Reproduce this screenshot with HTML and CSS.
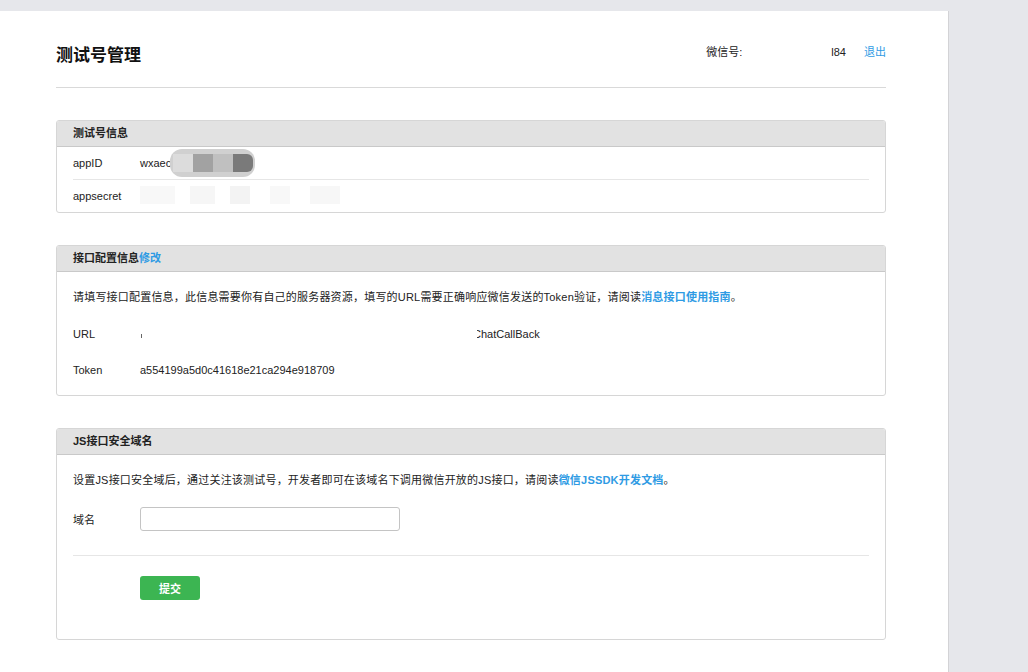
FILE: index.html
```html
<!DOCTYPE html>
<html lang="zh-CN">
<head>
<meta charset="utf-8">
<title>测试号管理</title>
<link rel="stylesheet" href="styles.css">
</head>
<body>
<div class="page">
  <div class="content">
    <div class="header">
      <h1 class="title">测试号管理</h1>
      <div class="account">
        <span class="acc-label">微信号:</span>
        <span class="acc-id">l84</span>
        <a class="link logout" href="#">退出</a>
      </div>
    </div>

    <div class="panel">
      <div class="panel-hd">测试号信息</div>
      <div class="panel-bd info">
        <div class="info-row">
          <span class="label">appID</span>
          <span class="value">wxaec<span class="blur"><span class="b1"></span><span class="b2"></span><span class="b3"></span><span class="b4"></span></span></span>
        </div>
        <div class="info-row">
          <span class="label">appsecret</span>
          <span class="value faint"><span class="f1"></span><span class="f2"></span><span class="f3"></span><span class="f4"></span><span class="f5"></span></span>
        </div>
      </div>
    </div>

    <div class="panel">
      <div class="panel-hd">接口配置信息<a class="link" href="#">修改</a></div>
      <div class="panel-bd cfg">
        <p class="desc">请填写接口配置信息，此信息需要你有自己的服务器资源，填写的URL需要正确响应微信发送的Token验证，请阅读<a class="link" href="#">消息接口使用指南</a>。</p>
        <div class="kv">
          <span class="label">URL</span>
          <span class="value"><span class="mask"><span class="mark"></span></span>ChatCallBack</span>
        </div>
        <div class="kv">
          <span class="label">Token</span>
          <span class="value">a554199a5d0c41618e21ca294e918709</span>
        </div>
      </div>
    </div>

    <div class="panel">
      <div class="panel-hd">JS接口安全域名</div>
      <div class="panel-bd js">
        <p class="desc">设置JS接口安全域后，通过关注该测试号，开发者即可在该域名下调用微信开放的JS接口，请阅读<a class="link" href="#">微信JSSDK开发文档</a>。</p>
        <div class="form-row">
          <span class="label">域名</span>
          <input class="input" type="text">
        </div>
        <div class="sep"></div>
        <div class="actions">
          <button class="btn" type="button">提交</button>
        </div>
      </div>
    </div>
  </div>
</div>
</body>
</html>
```

FILE: styles.css
```css
html, body {
  margin: 0;
  padding: 0;
}
body {
  background: #e6e7eb;
  font-family: "Liberation Sans", "Noto Sans CJK SC", sans-serif;
  font-size: 11px;
  color: #222;
}
.page {
  margin-top: 11px;
  width: 949px;
  min-height: 661px;
  background: #fff;
  border-right: 1px solid #d3d3d6;
  box-sizing: border-box;
}
.content {
  width: 830px;
  margin-left: 56px;
}
.header {
  display: flex;
  justify-content: space-between;
  align-items: flex-start;
  padding: 33px 0 19px;
  border-bottom: 1px solid #d9d9d9;
}
.title {
  margin: 0;
  font-size: 17px;
  line-height: 24px;
  font-weight: bold;
  color: #111;
}
.account {
  display: flex;
  line-height: 18px;
  margin-top: -1px;
  color: #222;
}
.acc-id {
  margin-left: 89px;
}
.logout {
  margin-left: 18px;
}
.link {
  color: #2f9be4;
  text-decoration: none;
  font-weight: bold;
}
.logout { font-weight: normal; }
.panel {
  margin-top: 32px;
  border: 1px solid #d6d6d6;
  border-radius: 3px;
  overflow: hidden;
}
.panel-hd {
  height: 25px;
  line-height: 25px;
  padding: 0 16px;
  background: #e2e2e2;
  border-bottom: 1px solid #c9c9c9;
  font-weight: bold;
  color: #222;
}
.label {
  display: inline-block;
  width: 67px;
  flex: none;
}
.info {
  padding: 0 16px;
}
.info-row {
  display: flex;
  align-items: center;
  height: 32px;
}
.info-row + .info-row {
  border-top: 1px solid #e6e6e6;
}
.value {
  display: inline-flex;
  align-items: center;
}
.blur {
  display: inline-flex;
  align-items: center;
  margin-left: -1px;
  height: 28px;
  padding: 0 2px 0 3px;
  border-radius: 12px;
  background: #d0d0d0;
}
.blur span {
  display: block;
  width: 20px;
  height: 18px;
}
.b1 { background: #dcdcdc; }
.b2 { background: #a2a2a2; }
.b3 { background: #c0c0c0; }
.b4 { background: #7a7a7a; border-radius: 0 6px 6px 0; }
.faint {
  position: relative;
  top: -1px;
  height: 18px;
}
.faint span {
  display: block;
  height: 18px;
  background: #f6f6f6;
}
.f1 { width: 35px; margin-right: 15px; background: #f8f8f8 !important; }
.f2 { width: 25px; margin-right: 15px; }
.f3 { width: 20px; margin-right: 20px; background: #f3f3f3 !important; }
.f4 { width: 20px; margin-right: 20px; background: #f8f8f8 !important; }
.f5 { width: 30px; background: #f7f7f7 !important; }
.cfg {
  padding: 16px 16px 7px;
}
.desc {
  margin: 0;
  line-height: 18px;
  letter-spacing: 0.2px;
}
.kv {
  display: flex;
  align-items: center;
  height: 36px;
}
.cfg .desc {
  margin-bottom: 10px;
}
.mask {
  display: inline-block;
  position: relative;
  z-index: 1;
  width: 337px;
  height: 14px;
  margin-right: -4px;
  background: #fff;
}
.mark {
  position: absolute;
  left: 1px;
  top: 7px;
  width: 1px;
  height: 4px;
  background: #666;
}
.js {
  padding: 16px 16px 39px;
}
.form-row {
  display: flex;
  align-items: center;
  margin-top: 18px;
}
.input {
  width: 260px;
  height: 24px;
  box-sizing: border-box;
  border: 1px solid #c4c4c4;
  border-radius: 3px;
  padding: 0 6px;
  font: inherit;
  outline: none;
}
.sep {
  margin-top: 24px;
  border-top: 1px solid #e6e6e6;
}
.actions {
  padding-left: 67px;
  margin-top: 20px;
}
.btn {
  display: block;
  width: 60px;
  height: 24px;
  border: 0;
  border-radius: 3px;
  background: #3cb552;
  color: #fff;
  font: inherit;
  font-weight: bold;
  cursor: pointer;
}
```
